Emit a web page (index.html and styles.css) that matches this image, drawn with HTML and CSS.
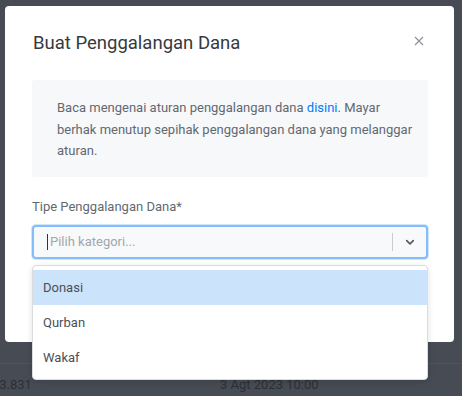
FILE: index.html
```html
<!DOCTYPE html>
<html lang="id">
<head>
    <meta charset="UTF-8">
    <meta name="viewport" content="width=device-width, initial-scale=1.0">
    <title>Buat Penggalangan Dana</title>
    <link rel="stylesheet" href="styles.css">
</head>
<body>
    <div class="page">
        <div class="page-row">
            <span class="cell-amount">Rp 153.831</span>
            <span class="cell-date">3 Agt 2023 10:00</span>
        </div>
    </div>

    <div class="modal">
        <div class="modal-header">
            <h2>Buat Penggalangan Dana</h2>
            <span class="close">
                <svg width="10" height="10" viewBox="0 0 10 10"><path d="M1 1l8 8M9 1l-8 8" stroke="#8d939a" stroke-width="1.2"/></svg>
            </span>
        </div>
        <div class="modal-body">
            <div class="notice">
                Baca mengenai aturan penggalangan dana <a href="#">disini</a>. Mayar berhak menutup sepihak penggalangan dana yang melanggar aturan.
            </div>

            <div class="form-group">
                <label>Tipe Penggalangan Dana*</label>
                <div class="select">
                    <div class="select-value">
                        <span class="caret"></span>
                        <span class="placeholder">Pilih kategori...</span>
                    </div>
                    <span class="separator"></span>
                    <span class="indicator">
                        <svg width="14" height="14" viewBox="0 0 20 20"><path d="M4.5 7.2a1.1 1.1 0 0 1 1.6 0L10 11.1l3.9-3.9a1.1 1.1 0 1 1 1.6 1.6l-4.7 4.7a1.1 1.1 0 0 1-1.6 0L4.5 8.8a1.1 1.1 0 0 1 0-1.6z" fill="#555"/></svg>
                    </span>
                </div>
            </div>
        </div>
    </div>

    <div class="menu">
        <div class="option active">Donasi</div>
        <div class="option">Qurban</div>
        <div class="option">Wakaf</div>
    </div>
</body>
</html>
```

FILE: styles.css
```css
body {
    margin: 0;
    width: 462px;
    height: 396px;
    overflow: hidden;
    background-color: #464b54;
    font-family: Roboto, "Liberation Sans", Arial, sans-serif;
    font-size: 13px;
    color: #626971;
}
.page {
    padding-top: 363px;
}
.page-row {
    display: flex;
    align-items: center;
    height: 32px;
    padding-top: 4px;
    border-top: 1px solid #4f545d;
    font-size: 13px;
    color: #2c3036;
}
.cell-amount {
    margin-left: -34px;
    width: 254px;
}
.modal {
    position: absolute;
    top: 6px;
    left: 5px;
    width: 449px;
    background: #fff;
    border-radius: 4px;
}
.modal-header {
    display: flex;
    align-items: center;
    justify-content: space-between;
    padding: 20px 28px 20px 28px;
    height: 34px;
}
.modal-header h2 {
    margin: 0;
    font-size: 18.5px;
    font-weight: normal;
    color: #343a40;
}
.close {
    display: flex;
    margin-right: 2px;
    margin-top: -4px;
}
.modal-body {
    padding: 0 26px 83px 27px;
}
.notice {
    background-color: #f7f8fa;
    border-radius: 3px;
    padding: 17px 14px 15px 25px;
    line-height: 21.5px;
}
.notice a {
    color: #007bff;
    text-decoration: none;
}
.form-group {
    margin-top: 22px;
}
label {
    display: block;
    margin-bottom: 11px;
    font-size: 13px;
}
.select {
    display: flex;
    align-items: center;
    height: 30px;
    border: 2px solid #84bdfa;
    border-radius: 4px;
    background-color: #f8f9fa;
    box-shadow: 0 0 0 1px #cfe4fd;
}
.select-value {
    flex: 1;
    display: flex;
    align-items: center;
    padding-left: 13px;
}
.caret {
    width: 1px;
    height: 16px;
    background: #333;
    margin-right: 2px;
}
.placeholder {
    color: #a3a7ab;
}
.separator {
    width: 1px;
    height: 18px;
    background: #cccccc;
}
.indicator {
    display: flex;
    width: 33px;
    justify-content: center;
}
.menu {
    position: absolute;
    top: 265px;
    left: 32px;
    width: 394px;
    padding: 4px 0 4px;
    background: #fff;
    border: 1px solid #dcdcdc;
    border-radius: 4px;
    box-shadow: 0 2px 6px rgba(0, 0, 0, 0.12);
}
.option {
    height: 35px;
    line-height: 35px;
    padding-left: 10px;
    color: #495057;
}
.option.active {
    background-color: #cce4fb;
}
```
